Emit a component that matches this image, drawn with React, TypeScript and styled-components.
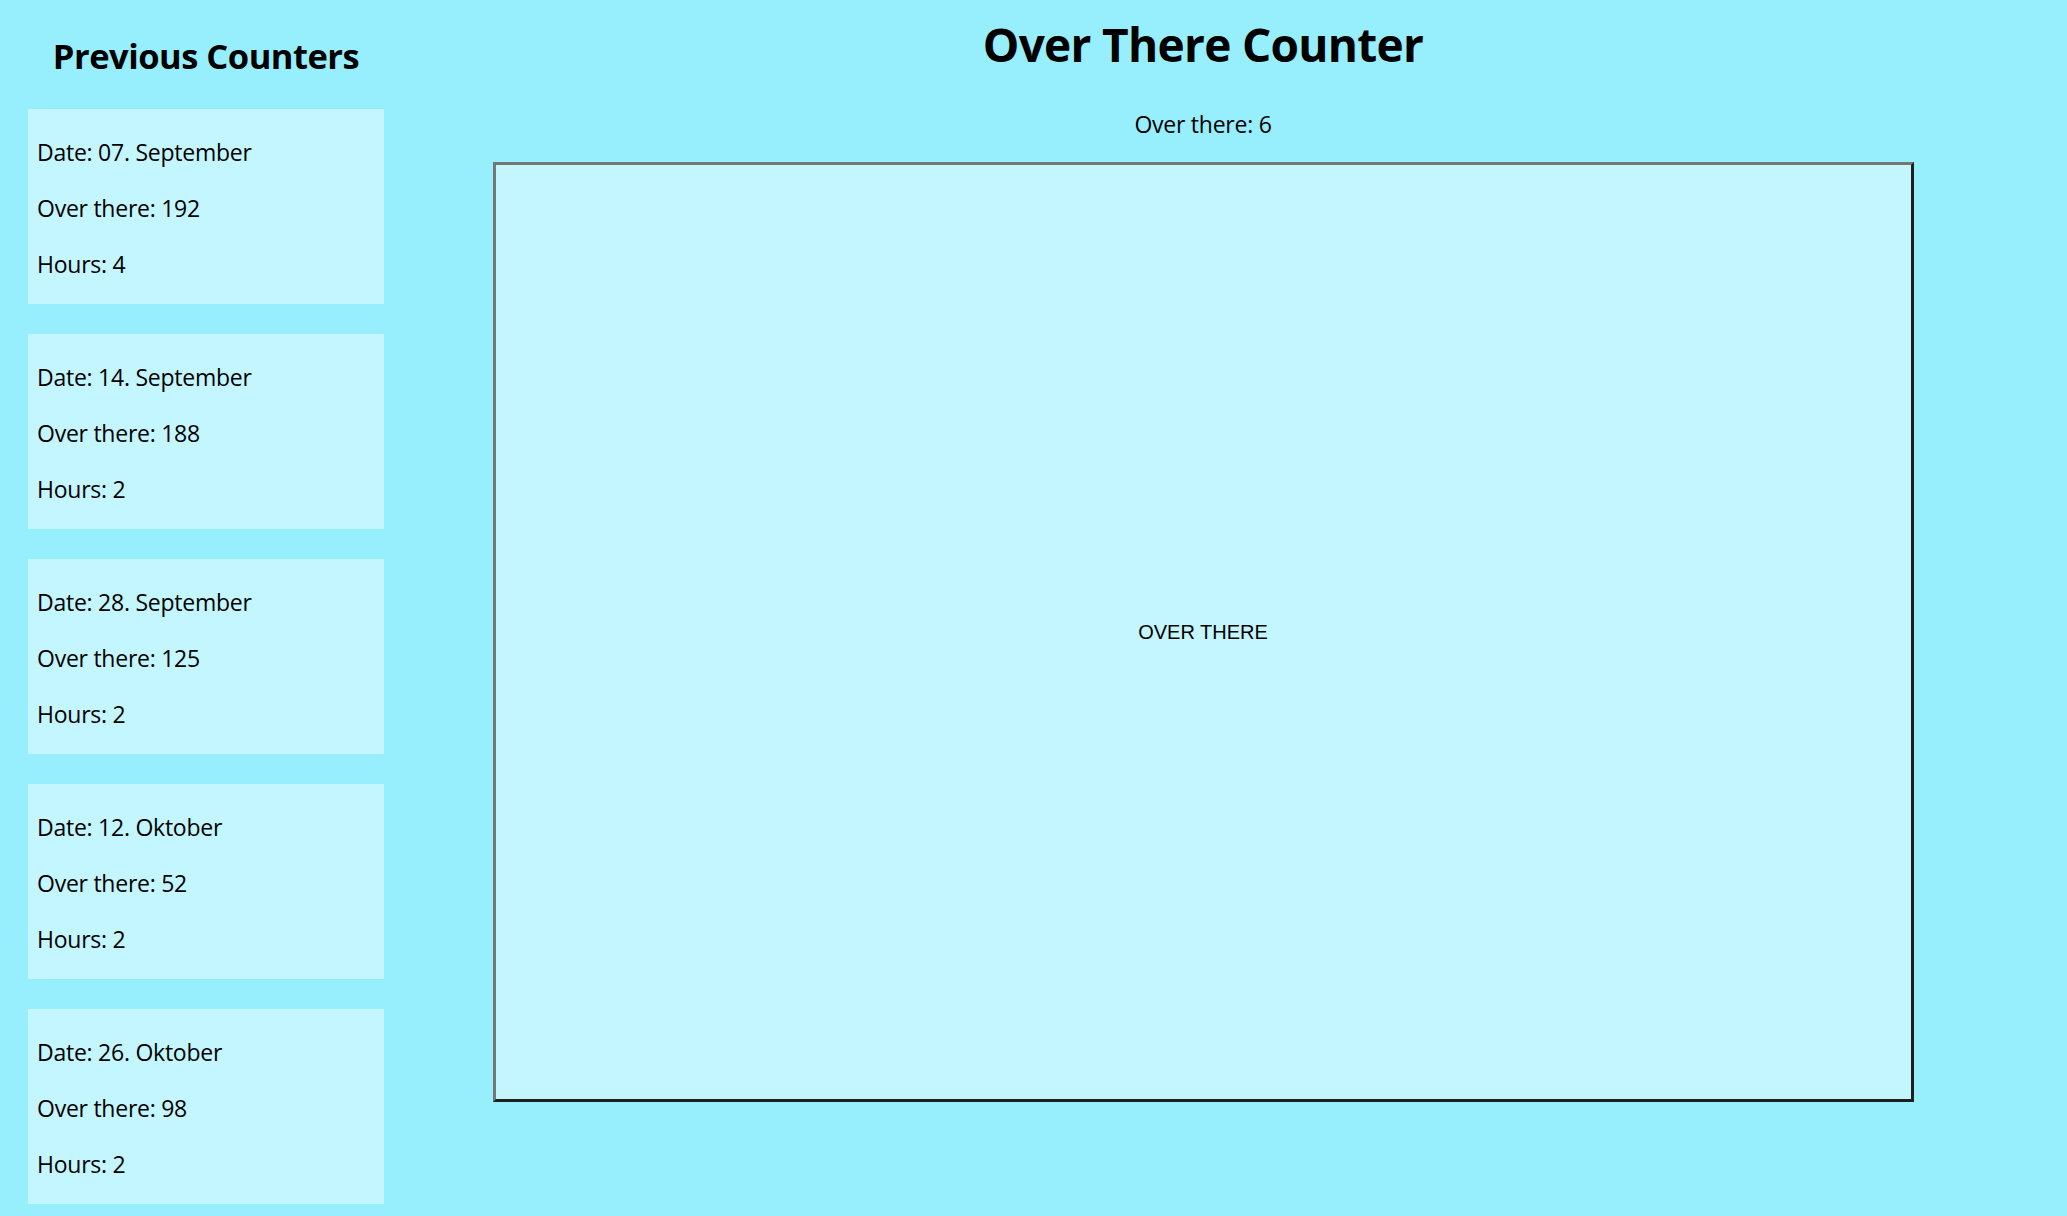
import React, { useState } from 'react';
import styled, { createGlobalStyle } from 'styled-components';

type Counter = {
    date: string;
    count: number;
    hours: number;
};

const previous: Counter[] = [
    { date: '07. September', count: 192, hours: 4 },
    { date: '14. September', count: 188, hours: 2 },
    { date: '28. September', count: 125, hours: 2 },
    { date: '12. Oktober', count: 52, hours: 2 },
    { date: '26. Oktober', count: 98, hours: 2 },
];

const GlobalStyle = createGlobalStyle`
    html, body {
        margin: 0;
        padding: 0;
        background: #97effe;
    }

    body {
        font-family: "Open Sans", "Noto Sans", sans-serif;
        color: #000;
    }
`;

const Page = styled.div`
    display: flex;
    align-items: flex-start;
    min-height: 1216px;
    background: #97effe;
`;

const Sidebar = styled.aside`
    width: 356px;
    margin-left: 28px;
    padding-top: 32px;
    display: flex;
    flex-direction: column;
    gap: 30px;
`;

const SideTitle = styled.h2`
    margin: 0 0 -1px;
    font-size: 34.5px;
    letter-spacing: -0.5px;
    line-height: 48px;
    font-weight: 700;
    text-align: center;
`;

const Card = styled.div`
    background: #c3f6ff;
    padding: 27px 9px 24px;
    display: flex;
    flex-direction: column;
    gap: 24px;
`;

const Line = styled.p`
    margin: 0;
    font-size: 23px;
    letter-spacing: -0.25px;
    line-height: 32px;
`;

const Main = styled.main`
    flex: 1;
    padding: 16px 73px 0 28px;
    display: flex;
    flex-direction: column;
    align-items: center;
`;

const Title = styled.h1`
    margin: 0;
    font-size: 46px;
    letter-spacing: -0.7px;
    line-height: 57px;
    font-weight: 700;
`;

const Count = styled.p`
    margin: 35px 0 22px;
    font-size: 23px;
    letter-spacing: -0.25px;
    line-height: 32px;
`;

const CountButton = styled.button`
    width: 1421px;
    height: 940px;
    box-sizing: border-box;
    background: #c3f6ff;
    border: 3px solid;
    border-color: #767676 #1f1f1f #1f1f1f #767676;
    font-family: "Liberation Sans", Arial, sans-serif;
    font-size: 20px;
    color: #000;
    cursor: pointer;
    padding: 0;
`;

const App: React.FC = () => {
    const [count, setCount] = useState(6);

    return (
        <>
            <GlobalStyle />
            <Page>
                <Sidebar>
                    <SideTitle>Previous Counters</SideTitle>
                    {previous.map((item) => (
                        <Card key={item.date}>
                            <Line>Date: {item.date}</Line>
                            <Line>Over there: {item.count}</Line>
                            <Line>Hours: {item.hours}</Line>
                        </Card>
                    ))}
                </Sidebar>
                <Main>
                    <Title>Over There Counter</Title>
                    <Count>Over there: {count}</Count>
                    <CountButton onClick={() => setCount(count + 1)}>OVER THERE</CountButton>
                </Main>
            </Page>
        </>
    );
};

export default App;
